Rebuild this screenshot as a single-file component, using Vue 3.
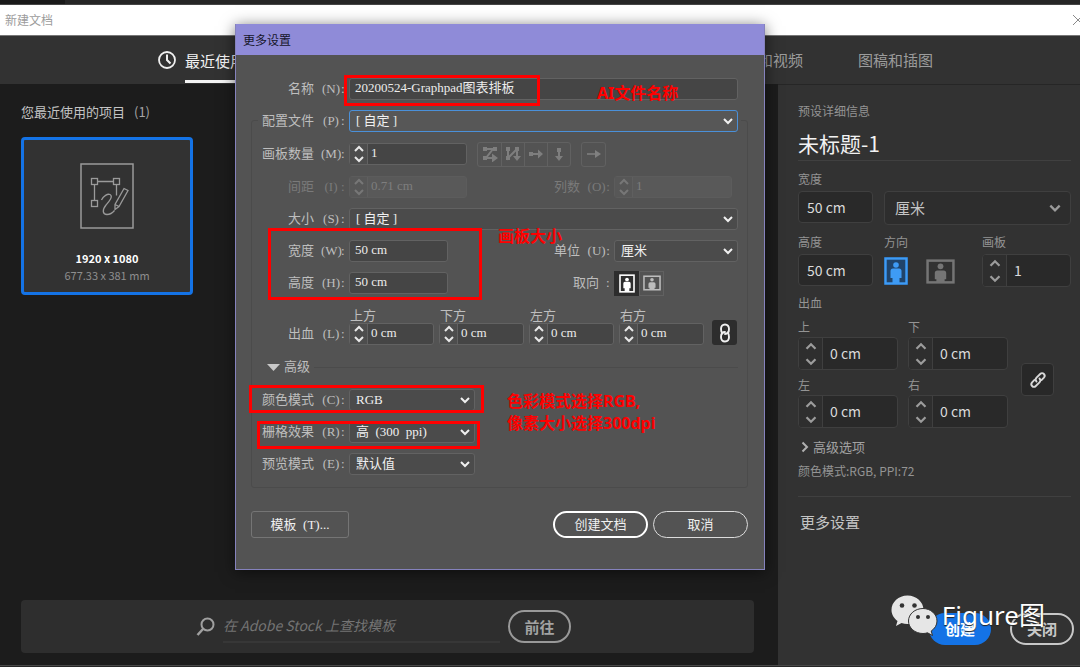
<script setup>
import { reactive, ref } from 'vue'

const name = ref('20200524-Graphpad图表排板')
const profile = ref('custom')
const size = ref('custom')
const artboards = ref('1')
const spacing = ref('0.71 cm')
const columns = ref('1')
const width = ref('50 cm')
const height = ref('50 cm')
const unit = ref('cm')
const portrait = ref(true)
const search = ref('')

const bleeds = reactive([
  { id: 'top', label: '上方', short: '上', value: '0 cm' },
  { id: 'bottom', label: '下方', short: '下', value: '0 cm' },
  { id: 'left', label: '左方', short: '左', value: '0 cm' },
  { id: 'right', label: '右方', short: '右', value: '0 cm' },
])

const advanced = reactive([
  { id: 'color', label: '颜色模式', key: '(C)', value: 'RGB' },
  { id: 'raster', label: '栅格效果', key: '(R)', value: '高\u00a0\u00a0(300\u00a0\u00a0ppi)' },
  { id: 'preview', label: '预览模式', key: '(E)', value: '默认值' },
])

const layouts = [
  { id: 'lay-grid-row', label: '按行设置网格' },
  { id: 'lay-grid-col', label: '按列设置网格' },
  { id: 'lay-row', label: '按行排列' },
  { id: 'lay-col', label: '按列排列' },
]
</script>

<template>
  <div class="page">
    <svg class="defs" aria-hidden="true">
      <symbol id="up" viewBox="0 0 12 8"><path d="M2 6l4-4 4 4" /></symbol>
      <symbol id="down" viewBox="0 0 12 8"><path d="M2 2l4 4 4-4" /></symbol>
      <symbol id="man-p" viewBox="0 0 24 28">
        <rect x="1.5" y="1.5" width="21" height="25" fill="none" stroke="currentColor" stroke-width="2.4" />
        <circle cx="12" cy="8" r="2.8" fill="currentColor" />
        <path d="M9 11.500h6q2.500 0 2.500 2.500v7h-2v5.500h-7V21h-2v-7q0-2.500 2.500-2.500z" fill="currentColor" />
      </symbol>
      <symbol id="man-l" viewBox="0 0 28 24">
        <rect x="1.500" y="1.500" width="25" height="21" fill="none" stroke="currentColor" stroke-width="2.4" />
        <circle cx="14" cy="7" r="2.800" fill="currentColor" />
        <path d="M11 11h6q2.500 0 2.500 2.500v6h-1.500v3h-8v-3H8.500v-6Q8.500 11 11 11z" fill="currentColor" />
      </symbol>
      <symbol id="lay-grid-row" viewBox="0 0 16 16">
        <path d="M3 3h2l6 0L4 12h7" fill="none" stroke="currentColor" stroke-width="2" />
        <path d="M1 1h4v4H1zM11 1h4v4h-4zM1 10h4v4H1zM10 7.500l6 4.500-6 4.500z" fill="currentColor" />
      </symbol>
      <symbol id="lay-grid-col" viewBox="0 0 16 16">
        <path d="M3 3v9L12 3v8" fill="none" stroke="currentColor" stroke-width="2" />
        <path d="M1 1h4v4H1zM10 1h4v4h-4zM1 10h4v4H1zM8 10h8l-4 5z" fill="currentColor" />
      </symbol>
      <symbol id="lay-row" viewBox="0 0 16 16">
        <path d="M3 8h8" fill="none" stroke="currentColor" stroke-width="2" />
        <path d="M1 6h4v4H1zM10 3.500l5 4.500-5 4.500z" fill="currentColor" />
      </symbol>
      <symbol id="lay-col" viewBox="0 0 16 16">
        <path d="M8 3v8" fill="none" stroke="currentColor" stroke-width="2" />
        <path d="M6 2h4v4H6zM4 10h8l-4 5z" fill="currentColor" />
      </symbol>
    </svg>

    <div class="strip"></div>
    <header class="titlebar">
      <span>新建文档</span>
      <button class="close" type="button" aria-label="关闭窗口">
        <svg width="12" height="12" viewBox="0 0 12 12"><path d="M1 1l10 10M11 1L1 11" stroke="#8a8a8a" /></svg>
      </button>
    </header>

    <nav class="tabs">
      <a class="tab active" href="#recent">
        <svg width="20" height="20" viewBox="0 0 20 20" fill="none" stroke="#f0f0f0">
          <circle cx="10" cy="10" r="8" stroke-width="1.800" />
          <path d="M10 4.500V10l3.500 3.500" stroke-width="2" />
        </svg>
        <span>最近使用项</span>
      </a>
      <div class="tabs-end">
        <a class="tab" href="#film">胶片和视频</a>
        <a class="tab" href="#art">图稿和插图</a>
      </div>
    </nav>

    <div class="body">
      <main class="main">
        <h2 class="heading">您最近使用的项目<span>(1)</span></h2>
        <button class="card" type="button">
          <svg width="54" height="66" viewBox="0 0 54 66" fill="none" stroke="#9a9a9a" stroke-width="1.300">
            <rect x="1" y="1" width="52" height="64" stroke-width="1.500" />
            <rect x="11.500" y="15.500" width="6" height="6" /><rect x="33.500" y="15.500" width="6" height="6" />
            <rect x="11.500" y="37.500" width="6" height="6" />
            <path d="M17.500 18.500h16M14.500 21.500v16M36.500 21.500v11" />
            <path d="M21.500 37c2-4 6-6.500 8.500-5.500 3.500 2-1 7-4 10.500-4 5-3.500 9.500 1 9.500 3 0 5-1 7.500-4" />
            <path d="M44 25.500l4 2-9 16-4 3v-5zM35 41.500l4 2" />
          </svg>
          <strong>1920 x 1080</strong>
          <small>677.33 x 381 mm</small>
        </button>

        <form class="search" @submit.prevent>
          <svg width="20" height="20" viewBox="0 0 20 20" fill="none" stroke="#a0a0a0">
            <circle cx="11.500" cy="7.500" r="6" stroke-width="2" /><path d="M7 12l-5.500 6" stroke-width="2.500" />
          </svg>
          <input v-model="search" type="text" aria-label="搜索" placeholder="在 Adobe Stock 上查找模板" />
          <button type="submit">前往</button>
        </form>
      </main>

      <aside class="side">
        <p class="cap">预设详细信息</p>
        <h1>未标题-1</h1>
        <div class="pair top-pair">
          <div class="w75">
            <label class="cap" for="s-w">宽度</label>
            <input id="s-w" v-model="width" class="box" type="text" />
          </div>
          <div class="grow low">
            <div class="sel">
              <select v-model="unit" class="box" aria-label="单位"><option value="cm">厘米</option></select>
              <svg class="chev" width="14" height="10"><use href="#down" /></svg>
            </div>
          </div>
        </div>
        <div class="pair second">
          <div class="w75">
            <label class="cap" for="s-h">高度</label>
            <input id="s-h" v-model="height" class="box" type="text" />
          </div>
          <div class="grow">
            <span class="cap">方向</span>
            <div class="orient">
              <button type="button" class="on" aria-label="纵向" @click="portrait = true"><svg width="24" height="28"><use href="#man-p" /></svg></button>
              <button type="button" aria-label="横向" @click="portrait = false"><svg width="29" height="25"><use href="#man-l" /></svg></button>
            </div>
          </div>
          <div class="w89">
            <label class="cap" for="s-a">画板</label>
            <div class="step">
              <span class="arrows">
                <button type="button" aria-label="增加"><svg width="14" height="9"><use href="#up" /></svg></button>
                <button type="button" aria-label="减少"><svg width="14" height="9"><use href="#down" /></svg></button>
              </span>
              <input id="s-a" v-model="artboards" type="text" />
            </div>
          </div>
        </div>
        <p class="cap bleed-cap">出血</p>
        <div class="bleed">
          <div class="bleed-grid">
            <div v-for="b in bleeds" :key="b.id">
              <label class="cap" :for="'s-' + b.id">{{ b.short }}</label>
              <div class="step">
                <span class="arrows">
                  <button type="button" aria-label="增加"><svg width="14" height="9"><use href="#up" /></svg></button>
                  <button type="button" aria-label="减少"><svg width="14" height="9"><use href="#down" /></svg></button>
                </span>
                <input :id="'s-' + b.id" v-model="b.value" type="text" />
              </div>
            </div>
          </div>
          <button class="link" type="button" aria-label="链接出血">
            <svg width="18" height="18" viewBox="0 0 18 18" fill="none" stroke="#d8d8d8" stroke-width="1.900" stroke-linecap="round">
              <path d="M7.500 10.500c-1.200-1.200-1.200-2.600 0-3.800l3.700-3.700c1.200-1.200 2.600-1.200 3.700 0s1.100 2.500 0 3.700l-2.400 2.400" />
              <path d="M10.500 7.500c1.200 1.200 1.200 2.600 0 3.800l-3.700 3.700c-1.200 1.200-2.600 1.200-3.700 0s-1.100-2.500 0-3.700l2.400-2.400" />
            </svg>
          </button>
        </div>
        <button class="adv" type="button">
          <svg width="8" height="12" viewBox="0 0 8 12"><path d="M1.500 1.500L6 6l-4.500 4.500" fill="none" stroke="#b0b0b0" stroke-width="2" /></svg>高级选项
        </button>
        <p class="cap mode">颜色模式:RGB, PPI:72</p>
        <hr />
        <a class="more" href="#more">更多设置</a>
        <div class="actions">
          <button class="create" type="button">创建</button>
          <button class="shut" type="button">关闭</button>
        </div>
      </aside>
    </div>
    <div class="base"></div>

    <section class="dialog" role="dialog" aria-labelledby="dlg-title">
      <h2 id="dlg-title">更多设置</h2>
      <div class="dlg-body">
        <div class="row name-row">
          <label class="lab" for="d-name">名称<i>(N)</i><b>:</b></label>
          <input id="d-name" v-model="name" class="inp grow" type="text" />
        </div>

        <div class="group">
          <div class="row profile">
            <label class="lab" for="d-prof">配置文件<i>(P)</i><b>:</b></label>
            <div class="dsel grow focus">
              <select id="d-prof" v-model="profile"><option value="custom">[ 自定 ]</option></select>
              <svg class="chev" width="12" height="8"><use href="#down" /></svg>
            </div>
          </div>

          <div class="row tall">
            <label class="lab" for="d-art">画板数量<i>(M)</i><b>:</b></label>
            <div class="dstep w118">
              <span class="arrows">
                <button type="button" aria-label="增加"><svg width="12" height="8"><use href="#up" /></svg></button>
                <button type="button" aria-label="减少"><svg width="12" height="8"><use href="#down" /></svg></button>
              </span>
              <input id="d-art" v-model="artboards" type="text" />
            </div>
            <div class="layouts">
              <button v-for="l in layouts" :key="l.id" type="button" disabled :aria-label="l.label">
                <svg width="16" height="16"><use :href="'#' + l.id" /></svg>
              </button>
            </div>
            <button class="dir" type="button" disabled aria-label="布局方向">
              <svg width="14" height="10" viewBox="0 0 14 10"><path d="M0 5h9" stroke="#808080" stroke-width="1.500" /><path d="M8 1l6 4-6 4z" fill="#808080" /></svg>
            </button>
          </div>

          <div class="row off">
            <label class="lab" for="d-gap">间距<i>(I)</i><b>:</b></label>
            <div class="dstep w118">
              <span class="arrows">
                <button type="button" disabled aria-label="增加"><svg width="12" height="8"><use href="#up" /></svg></button>
                <button type="button" disabled aria-label="减少"><svg width="12" height="8"><use href="#down" /></svg></button>
              </span>
              <input id="d-gap" v-model="spacing" type="text" disabled />
            </div>
            <div class="right">
              <label class="lab" for="d-col">列数<i>(O)</i><b>:</b></label>
              <div class="dstep w118">
                <span class="arrows">
                  <button type="button" disabled aria-label="增加"><svg width="12" height="8"><use href="#up" /></svg></button>
                  <button type="button" disabled aria-label="减少"><svg width="12" height="8"><use href="#down" /></svg></button>
                </span>
                <input id="d-col" v-model="columns" type="text" disabled />
              </div>
            </div>
          </div>

          <div class="row">
            <label class="lab" for="d-size">大小<i>(S)</i><b>:</b></label>
            <div class="dsel grow">
              <select id="d-size" v-model="size"><option value="custom">[ 自定 ]</option></select>
              <svg class="chev" width="12" height="8"><use href="#down" /></svg>
            </div>
          </div>

          <div class="row">
            <label class="lab" for="d-w">宽度<i>(W)</i><b>:</b></label>
            <input id="d-w" v-model="width" class="inp w99" type="text" />
            <div class="right">
              <label class="lab" for="d-unit">单位<i>(U)</i><b>:</b></label>
              <div class="dsel">
                <select id="d-unit" v-model="unit"><option value="cm">厘米</option></select>
                <svg class="chev" width="12" height="8"><use href="#down" /></svg>
              </div>
            </div>
          </div>

          <div class="row">
            <label class="lab" for="d-h">高度<i>(H)</i><b>:</b></label>
            <input id="d-h" v-model="height" class="inp w99" type="text" />
            <div class="right">
              <span class="lab plain">取向<b>:</b></span>
              <div class="dorient">
                <button type="button" class="on" aria-label="纵向" @click="portrait = true"><svg width="16" height="19"><use href="#man-p" /></svg></button>
                <button type="button" aria-label="横向" @click="portrait = false"><svg width="18" height="16"><use href="#man-l" /></svg></button>
              </div>
            </div>
          </div>

          <div class="row bleed-row">
            <span class="lab">出血<i>(L)</i><b>:</b></span>
            <div class="dbleeds">
              <div v-for="b in bleeds" :key="b.id">
                <label :for="'d-' + b.id">{{ b.label }}</label>
                <div class="dstep">
                  <span class="arrows">
                    <button type="button" aria-label="增加"><svg width="12" height="8"><use href="#up" /></svg></button>
                    <button type="button" aria-label="减少"><svg width="12" height="8"><use href="#down" /></svg></button>
                  </span>
                  <input :id="'d-' + b.id" v-model="b.value" type="text" />
                </div>
              </div>
            </div>
            <button class="dlink" type="button" aria-label="链接出血">
              <svg width="12" height="20" viewBox="0 0 12 20" fill="none" stroke="#f0f0f0" stroke-width="1.900" stroke-linecap="round">
                <path d="M3.500 10.500C2 9.500 2 8 2 6c0-2.800 1.500-4.500 4-4.500S10 3.200 10 6s-1 5-4 5" />
                <path d="M8.500 9.500C10 10.500 10 12 10 14c0 2.800-1.500 4.500-4 4.500S2 16.800 2 14s1-5 4-5" />
              </svg>
            </button>
          </div>

          <button class="fold" type="button"><svg width="13" height="7" viewBox="0 0 13 7"><path d="M0 0h13L6.500 7z" fill="#c8c8c8" /></svg>高级</button>

          <div v-for="a in advanced" :key="a.id" class="row">
            <label class="lab" :for="'d-' + a.id">{{ a.label }}<i>{{ a.key }}</i><b>:</b></label>
            <div class="dsel w126">
              <select :id="'d-' + a.id"><option>{{ a.value }}</option></select>
              <svg class="chev" width="12" height="8"><use href="#down" /></svg>
            </div>
          </div>
        </div>

        <div class="dlg-actions">
          <button class="tpl" type="button">模板&nbsp; (T)...</button>
          <button class="pill strong" type="button">创建文档</button>
          <button class="pill" type="button">取消</button>
        </div>
      </div>

      <div class="mark m1"></div>
      <div class="mark m2"></div>
      <div class="mark m3"></div>
      <div class="mark m4"></div>
      <p class="note n1">AI文件名称</p>
      <p class="note n2">画板大小</p>
      <p class="note n3">色彩模式选择RGB,<br />像素大小选择300dpi</p>
    </section>

    <div class="watermark">
      <svg width="48" height="42" viewBox="0 0 48 42">
        <path d="M17.500 1.500C8.500 1.500 1.500 8 1.500 16c0 4.500 2.500 8.500 6 11l-1.500 5 5.500-3c2 .7 4 1 6 1 9 0 16-6 16-14s-7-14.500-16-14.500z" fill="#e6e6e6" />
        <path d="M33 14.500c-8 0-14.500 5.500-14.500 12.500S25 39.500 33 39.500c1.500 0 3-.2 4.500-.7l5 2.700-1.300-4.500c3.500-2.300 5.800-5.800 5.800-10 0-7-6.500-12.500-14-12.500z" fill="#e6e6e6" stroke="#323232" />
        <g fill="#333"><circle cx="12" cy="11.500" r="2.300" /><circle cx="24.500" cy="11.500" r="2.300" /><circle cx="28" cy="23" r="2" /><circle cx="38" cy="23" r="2" /></g>
      </svg>
      <span>Figure图</span>
    </div>
  </div>
</template>

<style>
body { margin: 0; background: #1c1c1c; }
</style>

<style scoped>
* { box-sizing: border-box; }
.page {
  position: relative;
  display: flex;
  flex-direction: column;
  min-height: 100vh;
  overflow: hidden;
  background: #1c1c1c;
  color: #9c9c9c;
  font: 12px/20px "Noto Sans CJK SC", "Noto Sans", sans-serif;
}
.defs { position: absolute; width: 0; height: 0; }
p, h1, h2 { margin: 0; font-weight: 400; }
button { padding: 0; margin: 0; border: 0; background: none; color: inherit; font: inherit; }
input, select { min-width: 0; margin: 0; border: 0; background: none; color: inherit; font: inherit; outline: 0; border-radius: 0; }
select { appearance: none; width: 100%; }
svg { flex: none; }
a { color: inherit; text-decoration: none; }
.grow { flex: 1; }

.strip { height: 5px; background: linear-gradient(90deg, #191919 65px, #262626 65px); border-bottom: 1px solid #454545; }
.titlebar { display: flex; align-items: center; justify-content: space-between; height: 31px; padding-left: 5px; background: #fff; border-bottom: 1px solid #777; }
.close { display: flex; margin-right: -4px; }
.tabs { display: flex; justify-content: space-between; height: 48px; padding: 0 147px 0 157px; background: #323232; font-size: 15px; }
.tabs-end { display: flex; gap: 55px; }
.tab { display: flex; align-items: center; gap: 8px; }
.tab.active { color: #f4f4f4; }
.tab.active span { height: 46px; padding-top: 1px; border-bottom: 3px solid #f4f4f4; line-height: 46px; }

.body { flex: 1; display: flex; }
.main { flex: 1; display: flex; flex-direction: column; align-items: flex-start; padding: 18px 24px 12px 21px; }
.heading { color: #c4c4c4; font-size: 13px; line-height: 20px; }
.heading span { margin-left: 9px; color: #a6a6a6; }
.card {
  display: flex; flex-direction: column; align-items: center; width: 172px; height: 158px; margin-top: 15px; padding-top: 23px;
  border: 3px solid #1473e6; border-radius: 4px; background: #323232; font-size: 11px; line-height: 17px;
}
.card strong { margin-top: 21px; color: #fff; }
.card small { font-size: 11px; color: #8e8e8e; }
.search { display: flex; align-items: center; align-self: stretch; height: 53px; margin-top: auto; padding-left: 175px; border-radius: 4px; background: #2e2e2e; }
.search input { width: 277px; height: 32px; margin: 0 8px 0 7px; padding: 0 0 2px; border-bottom: 2px solid #373737; color: #ccc; font-size: 14px; font-style: italic; }
.search input::placeholder { color: #747474; opacity: 1; }
.search button { width: 63px; height: 33px; border: 2px solid #999; border-radius: 17px; color: #a2a2a2; font-size: 15px; font-weight: 700; }

.side { display: flex; flex-direction: column; width: 302px; padding: 16px 9px 20px 20px; border-top: 1px solid #262626; background: #323232; }
.cap { display: block; height: 20px; color: #949494; }
.side h1 { height: 33px; margin-top: 7px; border-bottom: 1px solid #404040; color: #f2f2f2; font-size: 21px; line-height: 30px; }
.pair { display: flex; gap: 11px; }
.top-pair { margin-top: 8px; }
.second { margin-top: 9px; }
.pair .cap { margin-bottom: 2px; }
.w75 { width: 75px; }
.w89 { width: 89px; }
.low { padding-top: 22px; }
.box { display: block; width: 100%; height: 32px; padding: 0 8px; border: 1px solid #3f3f3f; border-radius: 4px; background: #292929; color: #dadada; font-size: 14px; }
.sel { position: relative; }
.sel select { height: 34px; padding-left: 10px; background: #2d2d2d; color: #c4c4c4; font-size: 15px; margin-bottom: -2px; }
.sel .chev { position: absolute; right: 9px; top: 12px; }
.chev, .arrows svg { display: block; fill: none; stroke: #9b9b9b; stroke-width: 2; pointer-events: none; }
.orient { display: flex; align-items: center; gap: 18px; height: 34px; }
.orient button { display: flex; color: #757575; }
.orient .on { color: #3e9bf5; background: #20446b; }
.step { display: flex; height: 33px; overflow: hidden; border: 1px solid #3f3f3f; border-radius: 4px; background: #292929; }
.step .arrows { width: 24px; border-right: 1px solid #3f3f3f; background: #2e2e2e; gap: 6px; }
.arrows { display: flex; flex: none; flex-direction: column; align-items: center; justify-content: center; }
.step input { width: 100%; padding: 0 7px 2px; color: #dadada; font-size: 14px; }
.bleed-cap { margin-top: 5px; }
.bleed { display: flex; align-items: center; gap: 13px; }
.bleed-grid { display: grid; grid-template-columns: 100px 100px; gap: 5px 10px; margin-top: 4px; }
.link { display: flex; align-items: center; justify-content: center; width: 33px; height: 33px; margin-top: 18px; border: 1px solid #3f3f3f; border-radius: 4px; background: #282828; }
.adv { display: flex; align-items: center; gap: 4px; height: 20px; margin: 9px 0 0 3px; color: #a2a2a2; font-size: 13px; }
.mode { margin-top: 4px; }
hr { width: 100%; height: 1px; margin: 15px 0; border: 0; background: #404040; }
.more { padding-left: 2px; color: #c4c4c4; font-size: 15px; }
.actions { display: flex; justify-content: flex-end; gap: 19px; margin: auto -3px 0 0; }
.actions button { width: 62px; height: 32px; border-radius: 16px; font-size: 15px; font-weight: 700; }
.create { background: #1473e6; color: #fff; }
.actions .shut { width: 64px; border: 2px solid #c8c8c8; color: #c8c8c8; }
.base { height: 2px; background: #262626; border-top: 1px solid #484848; }

.dialog {
  position: absolute; left: 235px; top: 24px; width: 530px; border: 1px solid #8582bd; border-top: 0; background: #535353;
  box-shadow: 0 2px 14px rgba(0, 0, 0, 0.55); color: #bebebe; font: 13px/22px "Liberation Serif", "Noto Sans CJK SC", serif;
}
.dialog h2 { height: 31px; padding-left: 7px; background: #8f8bd8; color: #16162a; font: 12px/32px "Noto Sans CJK SC", sans-serif; }
.dlg-body { padding: 23px 16px 31px 15px; }
.row { display: flex; align-items: center; height: 22px; }
.lab { display: flex; justify-content: flex-end; width: 84px; margin-right: 4px; white-space: nowrap; }
.lab i { width: 20px; margin-left: 7px; font-style: normal; text-align: center; }
.lab b { width: 4px; font-weight: 400; }
.plain b { margin-left: 7px; }
.name-row { margin-bottom: 20px; padding: 0 10px; }
.inp, .dsel, .dstep { height: 22px; border: 1px solid #626262; border-radius: 3px; background: #454545; color: #ececec; }
.inp { padding: 0 5px 3px; }
.w99 { width: 99px; }
.dialog .w118 { width: 118px; }
.dialog .w126 { width: 126px; }
.dsel { position: relative; background: #4b4b4b; }
.dsel select { display: block; height: 20px; padding: 0 6px; color: #f0f0f0; font-size: 13px; line-height: 20px; }
.dsel .chev { position: absolute; right: 3px; top: 6px; stroke: #f0f0f0; }
.dsel.focus { border-color: #4a90d9; background: #575757; }
.dstep { display: flex; }
.dstep .arrows { width: 18px; border-right: 1px solid #626262; background: #4d4d4d; gap: 2px; }
.dstep .arrows svg { stroke: #e8e8e8; }
.dstep input { width: 100%; padding: 0 3px 3px; }
.group { display: flex; flex-direction: column; gap: 10px; padding: 0 9px 12px; border: 1px solid #4b4b4b; border-radius: 3px; }
.profile { margin: -11px -3px 0; padding: 0 3px; background: #535353; }
.tall { height: 24px; }
.layouts { display: flex; margin-left: 10px; border: 1px solid #616161; border-radius: 3px; }
.layouts button { display: flex; align-items: center; justify-content: center; width: 23px; height: 23px; color: #7e7e7e; }
.layouts button + button { border-left: 1px solid #616161; }
.dir { display: flex; align-items: center; justify-content: center; width: 25px; height: 25px; margin-left: 10px; border: 1px solid #616161; border-radius: 3px; }
.off { color: #7a7a7a; }
.off .dstep { border-color: #5c5c5c; background: #595959; color: #7e7e7e; }
.off .dstep .arrows { border-color: #5f5f5f; background: #575757; }
.off .dstep .arrows svg { stroke: #777; }
.right { display: grid; grid-template-columns: 60px 124px; margin-left: auto; align-items: center; }
.right .lab { width: 56px; }
.dorient { display: flex; border-radius: 3px; }
.dorient button { display: flex; align-items: center; justify-content: center; width: 25px; height: 25px; border: 1px solid #616161; color: #bcbcbc; }
.dorient .on { border-color: #2d2d2d; background: #2d2d2d; color: #fff; }
.bleed-row { align-items: flex-end; height: 36px; margin-top: 5px; }
.dbleeds { display: grid; grid-template-columns: repeat(4, 85px); gap: 5px; }
.dbleeds label { display: block; padding-left: 1px; line-height: 14px; }
.dlink { display: flex; align-items: center; justify-content: center; width: 25px; height: 25px; margin-left: 8px; border-radius: 3px; background: #2d2d2d; }
.fold { display: flex; align-items: center; gap: 4px; height: 24px; padding-left: 6px; }
.fold::after { content: ""; flex: 1; height: 1px; background: #4b4b4b; }
.dlg-actions { display: flex; align-items: center; gap: 5px; margin-top: 23px; color: #f0f0f0; }
.tpl { width: 98px; height: 27px; margin-right: auto; border: 1px solid #757575; border-radius: 3px; }
.pill { width: 95px; height: 27px; border: 1px solid #dcdcdc; border-radius: 14px; }
.strong { border: 2px solid #fff; }

.mark { position: absolute; border: 3px solid #f00; pointer-events: none; }
.m1 { left: 108px; top: 51px; width: 196px; height: 31px; }
.m2 { left: 32px; top: 204px; width: 214px; height: 72px; }
.m3 { left: 13px; top: 361px; width: 235px; height: 28px; }
.m4 { left: 21px; top: 397px; width: 223px; height: 28px; }
.note { position: absolute; color: #f00; font: 700 16px/22px "Noto Sans", "Noto Sans CJK SC", sans-serif; white-space: nowrap; }
.n1 { left: 361px; top: 58px; }
.n2 { left: 262px; top: 201px; }
.n3 { left: 271px; top: 366px; }

.watermark { position: absolute; right: 35px; bottom: 31px; display: flex; align-items: center; gap: 4px; color: #fff; font: 26px/42px "Noto Sans", "Noto Sans CJK SC", sans-serif; text-shadow: 0 1px 1px #222; pointer-events: none; }
</style>
